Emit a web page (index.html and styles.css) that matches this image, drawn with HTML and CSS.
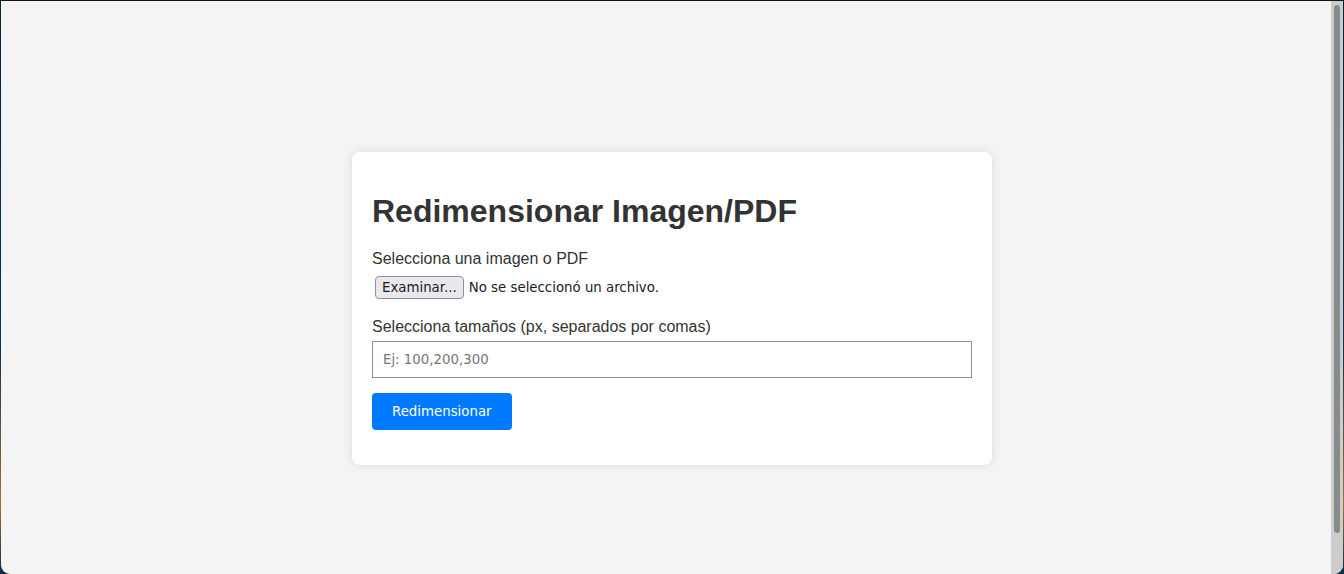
FILE: index.html
```html
<!DOCTYPE html>
<html lang="es">
<head>
<meta charset="utf-8">
<title>Redimensionar Imagen/PDF</title>
<link rel="stylesheet" href="styles.css">
</head>
<body>
<div class="window">
  <main class="viewport">
    <div class="card">
      <h1 class="title">Redimensionar Imagen/PDF</h1>
      <form class="form">
        <label class="label">Selecciona una imagen o PDF</label>
        <div class="file-row">
          <span class="file-btn">Examinar...</span>
          <span class="file-text">No se seleccionó un archivo.</span>
        </div>
        <label class="label label-sizes" for="sizes">Selecciona tamaños (px, separados por comas)</label>
        <input class="text-input" id="sizes" type="text" placeholder="Ej: 100,200,300">
        <button class="submit" type="button">Redimensionar</button>
      </form>
    </div>
  </main>
  <div class="scrollbar"><div class="thumb"></div></div>
</div>
</body>
</html>
```
FILE: styles.css
```css
html, body {
  margin: 0;
  padding: 0;
  height: 100%;
}
body {
  background: linear-gradient(180deg, #0b2236 0%, #0d3150 60%, #a5702f 88%, #0d2a4a 100%);
  border-top: 1px solid #141414;
  box-sizing: border-box;
  overflow: hidden;
}
.window {
  display: flex;
  margin-left: 1px;
  width: 1342px;
  height: 573px;
  background: #f4f4f4;
  border-radius: 0 0 9px 9px;
  overflow: hidden;
}
.viewport {
  flex: 1;
  display: flex;
  justify-content: center;
  align-items: flex-start;
  padding: 151px 0 0 12px;
  font-family: "Liberation Sans", Arial, sans-serif;
  color: #333;
}
.card {
  width: 640px;
  box-sizing: border-box;
  padding: 20px;
  background: #fff;
  border-radius: 8px;
  box-shadow: 0 0 10px rgba(0, 0, 0, 0.1);
}
.title {
  font-size: 32px;
  font-weight: bold;
  margin: 21px 0 20px;
  color: #333;
}
.form {
  display: flex;
  flex-direction: column;
  align-items: flex-start;
}
.label {
  display: block;
  font-size: 16px;
  margin-bottom: 7px;
}
.label-sizes {
  margin-bottom: 5px;
}
.file-row {
  display: flex;
  align-items: center;
  gap: 5px;
  margin: 1px 0 19px 3px;
  font-family: "DejaVu Sans", sans-serif;
  font-size: 13.333px;
  color: #1b1b1b;
}
.file-btn {
  display: inline-block;
  box-sizing: border-box;
  height: 23px;
  line-height: 21px;
  padding: 0 6px;
  background: #e9e9ed;
  border: 1px solid #8f8f9d;
  border-radius: 4px;
  color: #1b1b1b;
}
.text-input {
  width: 100%;
  box-sizing: border-box;
  height: 37px;
  padding: 0 10px;
  margin: 0 0 15px;
  border: 1px solid #8f8f9d;
  border-radius: 0;
  font-family: "DejaVu Sans", sans-serif;
  font-size: 13.333px;
  color: #1b1b1b;
  background: #fff;
}
.text-input::placeholder {
  color: #767676;
}
.submit {
  height: 37px;
  padding: 0 20px;
  margin: 0 0 15px;
  background: #007bff;
  color: #fff;
  border: none;
  border-radius: 4px;
  font-family: "DejaVu Sans", sans-serif;
  font-size: 13.333px;
}
.scrollbar {
  width: 12px;
  flex: none;
  background: #cdcdcd;
  padding: 4px 3px 0;
  box-sizing: border-box;
}
.thumb {
  height: 528px;
  background: #878b8b;
  border-radius: 3px;
}
```
